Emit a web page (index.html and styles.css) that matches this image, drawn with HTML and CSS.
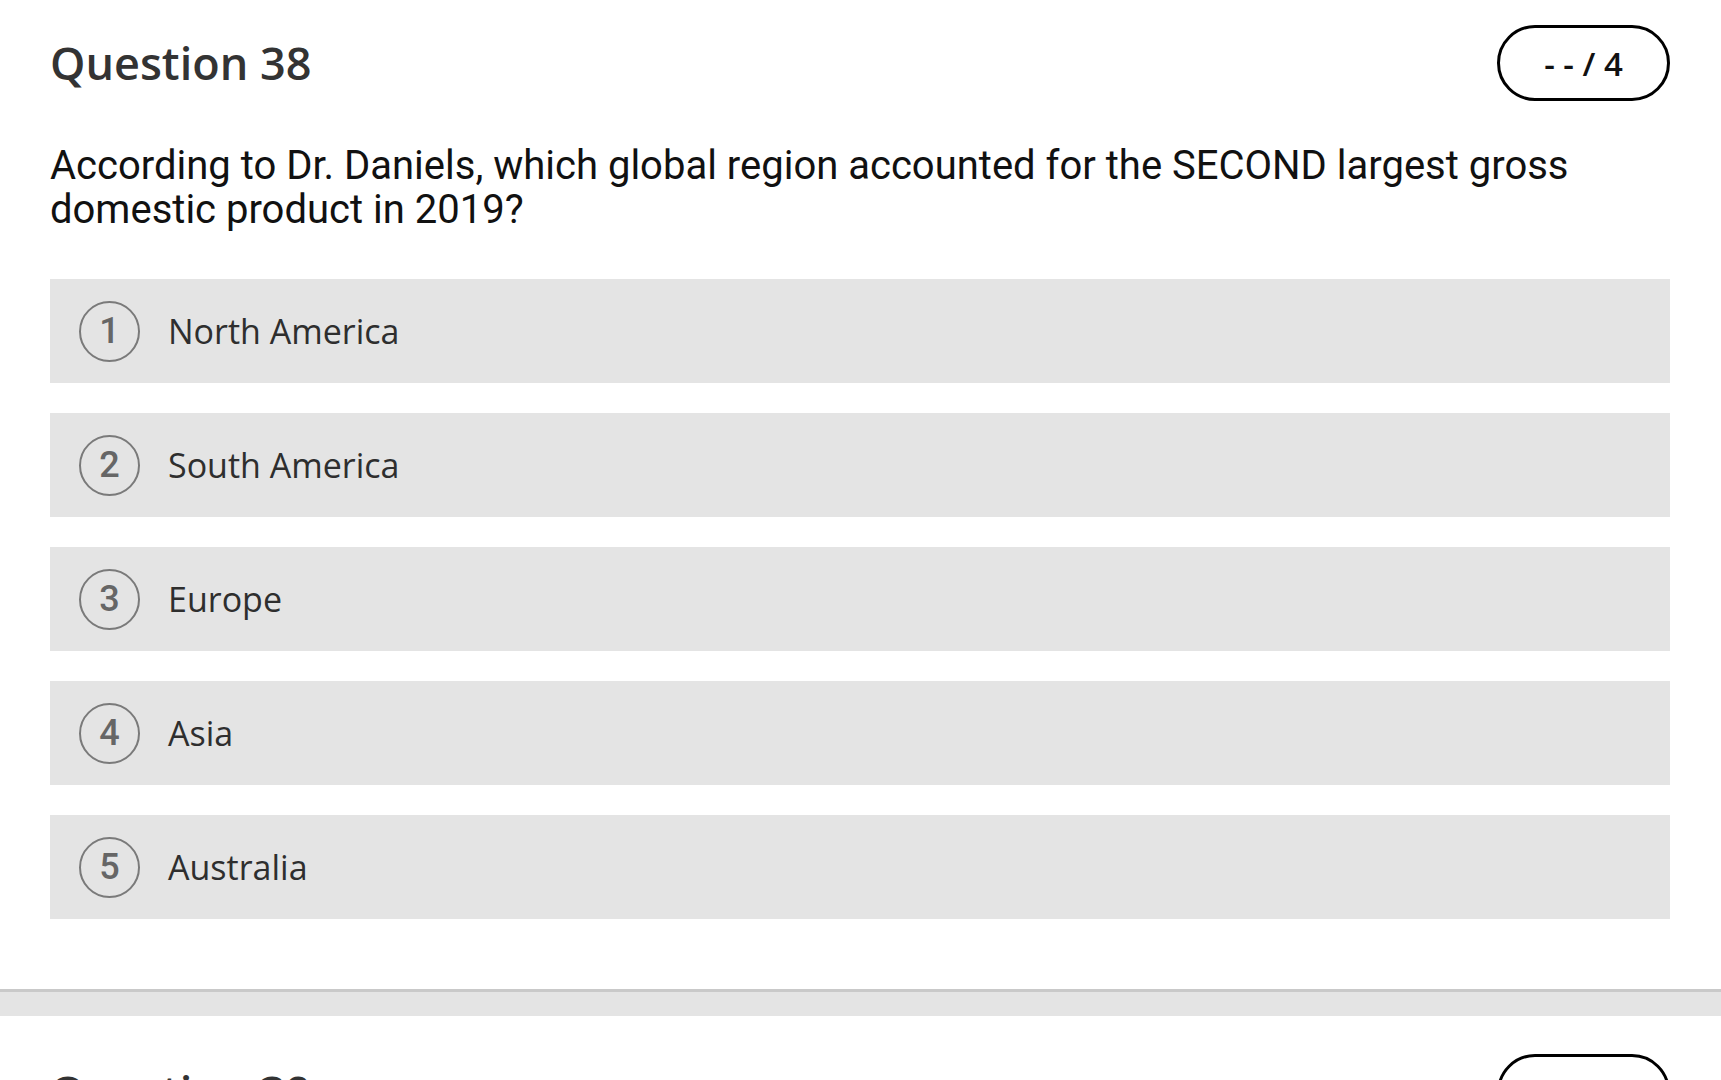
FILE: index.html
```html
<!DOCTYPE html>
<html lang="en">
<head>
<meta charset="utf-8">
<title>Question 38</title>
<link rel="stylesheet" href="styles.css">
</head>
<body>
<main class="feed">
  <section class="card card-first">
    <header class="card-head">
      <h1 class="q-title">Question 38</h1>
      <div class="score">- - / 4</div>
    </header>
    <p class="q-text">According to Dr. Daniels, which global region accounted for the SECOND largest gross domestic product in 2019?</p>
    <ol class="options">
      <li class="option"><span class="num">1</span><span class="label">North America</span></li>
      <li class="option"><span class="num">2</span><span class="label">South America</span></li>
      <li class="option"><span class="num">3</span><span class="label">Europe</span></li>
      <li class="option"><span class="num">4</span><span class="label">Asia</span></li>
      <li class="option"><span class="num">5</span><span class="label">Australia</span></li>
    </ol>
  </section>
  <div class="divider"></div>
  <section class="card">
    <header class="card-head">
      <h1 class="q-title">Question 39</h1>
      <div class="score">- - / 4</div>
    </header>
  </section>
</main>
</body>
</html>
```
FILE: styles.css
```css
html, body {
  margin: 0;
  padding: 0;
  background: #ffffff;
  overflow: hidden;
  height: 1080px;
}
.feed {
  display: flex;
  flex-direction: column;
}
.card {
  padding: 38px 51px 70px 50px;
}
.card-first {
  padding-top: 25px;
}
.card-head {
  display: flex;
  justify-content: space-between;
  align-items: flex-start;
  height: 76px;
}
.q-title {
  margin: 0;
  font-family: "Open Sans", "Liberation Sans", sans-serif;
  font-weight: 600;
  font-size: 45px;
  line-height: 76px;
  color: #333333;
}
.score {
  box-sizing: border-box;
  width: 173px;
  height: 76px;
  border: 3px solid #000;
  border-radius: 38px;
  display: flex;
  align-items: center;
  justify-content: center;
  font-family: "Open Sans", "Liberation Sans", sans-serif;
  font-weight: 600;
  font-size: 33px;
  color: #111;
}
.q-text {
  margin: 43px 0 0 0;
  font-family: Roboto, "Liberation Sans", sans-serif;
  font-size: 40px;
  line-height: 44px;
  color: #111111;
}
.options {
  list-style: none;
  margin: 47px 0 0 0;
  padding: 0;
  display: flex;
  flex-direction: column;
  gap: 30px;
}
.option {
  height: 104px;
  background: #e4e4e4;
  display: flex;
  align-items: center;
  padding-left: 29px;
  gap: 28px;
}
.num {
  box-sizing: border-box;
  width: 61px;
  height: 61px;
  border: 2px solid #7a7a7a;
  border-radius: 50%;
  display: flex;
  align-items: center;
  justify-content: center;
  font-family: Roboto, "Liberation Sans", sans-serif;
  font-weight: 500;
  font-size: 36px;
  color: #666666;
}
.label {
  font-family: "Open Sans", "Liberation Sans", sans-serif;
  font-size: 34px;
  color: #2e2e2e;
}
.divider {
  height: 24px;
  background: #e4e4e4;
  border-top: 3px solid #c9c9c9;
}
```
